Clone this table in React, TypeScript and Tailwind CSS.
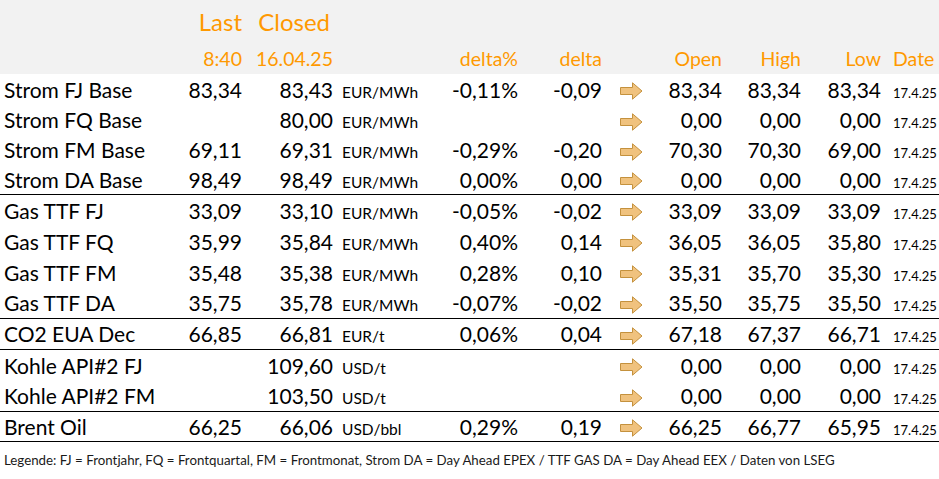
import * as React from "react"

type Row = {
  name: string
  last: string
  closed: string
  unit: string
  pct: string
  delta: string
  open: string
  high: string
  low: string
  h: string
  border?: boolean
}

const rows: Row[] = [
  { name: "Strom FJ Base", last: "83,34", closed: "83,43", unit: "EUR/MWh", pct: "-0,11%", delta: "-0,09", open: "83,34", high: "83,34", low: "83,34", h: "h-[31px]" },
  { name: "Strom FQ Base", last: "", closed: "80,00", unit: "EUR/MWh", pct: "", delta: "", open: "0,00", high: "0,00", low: "0,00", h: "h-[30px]" },
  { name: "Strom FM Base", last: "69,11", closed: "69,31", unit: "EUR/MWh", pct: "-0,29%", delta: "-0,20", open: "70,30", high: "70,30", low: "69,00", h: "h-[30px]" },
  { name: "Strom DA Base", last: "98,49", closed: "98,49", unit: "EUR/MWh", pct: "0,00%", delta: "0,00", open: "0,00", high: "0,00", low: "0,00", h: "h-[30px]", border: true },
  { name: "Gas TTF FJ", last: "33,09", closed: "33,10", unit: "EUR/MWh", pct: "-0,05%", delta: "-0,02", open: "33,09", high: "33,09", low: "33,09", h: "h-[31px]" },
  { name: "Gas TTF FQ", last: "35,99", closed: "35,84", unit: "EUR/MWh", pct: "0,40%", delta: "0,14", open: "36,05", high: "36,05", low: "35,80", h: "h-[31px]" },
  { name: "Gas TTF FM", last: "35,48", closed: "35,38", unit: "EUR/MWh", pct: "0,28%", delta: "0,10", open: "35,31", high: "35,70", low: "35,30", h: "h-[31px]" },
  { name: "Gas TTF DA", last: "35,75", closed: "35,78", unit: "EUR/MWh", pct: "-0,07%", delta: "-0,02", open: "35,50", high: "35,75", low: "35,50", h: "h-[31px]", border: true },
  { name: "CO2 EUA Dec", last: "66,85", closed: "66,81", unit: "EUR/t", pct: "0,06%", delta: "0,04", open: "67,18", high: "67,37", low: "66,71", h: "h-[31px]", border: true },
  { name: "Kohle API#2 FJ", last: "", closed: "109,60", unit: "USD/t", pct: "", delta: "", open: "0,00", high: "0,00", low: "0,00", h: "h-[31px]" },
  { name: "Kohle API#2 FM", last: "", closed: "103,50", unit: "USD/t", pct: "", delta: "", open: "0,00", high: "0,00", low: "0,00", h: "h-[31px]", border: true },
  { name: "Brent Oil", last: "66,25", closed: "66,06", unit: "USD/bbl", pct: "0,29%", delta: "0,19", open: "66,25", high: "66,77", low: "65,95", h: "h-[30px]", border: true },
]

const cols = "grid grid-cols-[185px_57px_91px_117px_68px_84px_48px_72px_79px_80px_58px]"

const Arrow = () => (
  <svg width="23" height="18" viewBox="0 0 23 18">
    <path d="M0.5 5.5 H12.5 V0.8 L22 9 L12.5 17.2 V12.5 H0.5 Z" fill="#f0c27e" stroke="#c4913d" strokeWidth="1" strokeLinejoin="miter" />
  </svg>
)

export default function App() {
  return (
    <div className="w-[939px] h-[479px] bg-white text-black overflow-hidden" style={{ fontFamily: "Lato, 'Open Sans', sans-serif" }}>
      {/* header */}
      <div className="bg-[#f2f2f2] h-[74px] text-[#ff9900]">
        <div className={cols + " h-[44px] items-center text-[24px]"}>
          <div />
          <div className="text-right">Last</div>
          <div className="text-right pr-[3px]">Closed</div>
        </div>
        <div className={cols + " h-[30px] items-center text-[19.5px]"}>
          <div />
          <div className="text-right">8:40</div>
          <div className="text-right">16.04.25</div>
          <div />
          <div className="text-right">delta%</div>
          <div className="text-right">delta</div>
          <div />
          <div className="text-right">Open</div>
          <div className="text-right">High</div>
          <div className="text-right">Low</div>
          <div className="pl-[12px]">Date</div>
        </div>
      </div>

      {/* rows: cells sit on a shared baseline like the spreadsheet */}
      {rows.map((r) => (
        <div key={r.name} className={cols + " content-center items-baseline pt-[3px] text-[21px] leading-[26px] " + r.h + (r.border ? " border-b border-black" : "")}>
          <div className="pl-[4px] whitespace-nowrap">{r.name}</div>
          <div className="text-right">{r.last}</div>
          <div className="text-right">{r.closed}</div>
          <div className="pl-[9px] text-[15.5px]">{r.unit}</div>
          <div className="text-right">{r.pct}</div>
          <div className="text-right">{r.delta}</div>
          <div className="pl-[18px] self-center flex items-center"><Arrow /></div>
          <div className="text-right">{r.open}</div>
          <div className="text-right">{r.high}</div>
          <div className="text-right">{r.low}</div>
          <div className="pl-[12px] text-[13px]">17.4.25</div>
        </div>
      ))}

      {/* legend */}
      <div className="h-[38px] flex items-center pl-[4px] text-[13.3px] text-[#1a1a1a] whitespace-nowrap">
        Legende: FJ = Frontjahr, FQ = Frontquartal, FM = Frontmonat, Strom DA = Day Ahead EPEX / TTF GAS DA = Day Ahead EEX / Daten von LSEG
      </div>
    </div>
  )
}
